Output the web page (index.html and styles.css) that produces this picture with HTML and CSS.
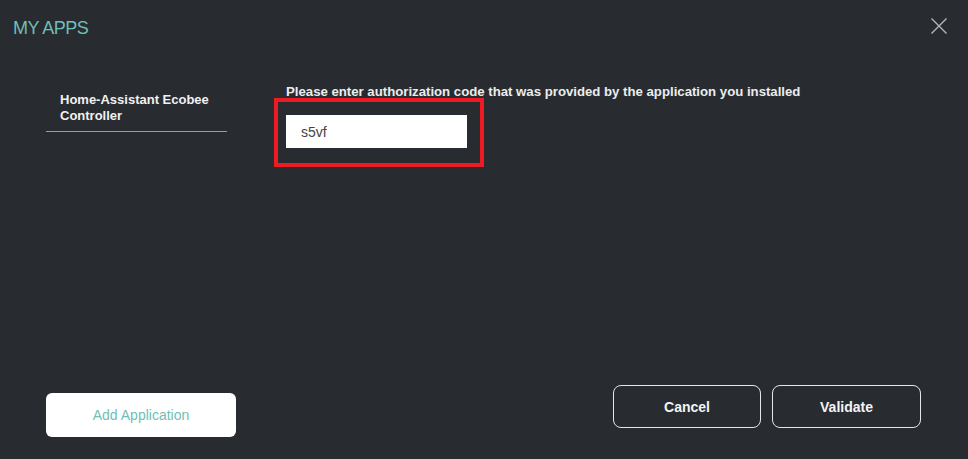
FILE: index.html
```html
<!DOCTYPE html>
<html>
<head>
<meta charset="utf-8">
<link rel="stylesheet" href="styles.css">
</head>
<body>
<div class="modal">
  <header class="header">
    <h1 class="title">MY APPS</h1>
    <button class="close" aria-label="Close">
      <svg width="16" height="16" viewBox="0 0 16 16"><path d="M0.5 0.5 L15.5 15.5 M15.5 0.5 L0.5 15.5" stroke="#b4b7ba" stroke-width="1.4" fill="none"/></svg>
    </button>
  </header>
  <div class="content">
    <aside class="sidebar">
      <div class="app-item">Home-Assistant Ecobee Controller</div>
    </aside>
    <main class="main">
      <p class="label">Please enter authorization code that was provided by the application you installed</p>
      <div class="highlight">
        <input class="code" type="text" value="s5vf">
      </div>
    </main>
  </div>
  <footer class="footer">
    <button class="btn-add">Add Application</button>
    <div class="actions">
      <button class="btn-outline">Cancel</button>
      <button class="btn-outline">Validate</button>
    </div>
  </footer>
</div>
</body>
</html>
```
FILE: styles.css
```css
html, body {
  margin: 0;
  padding: 0;
  background: #282c31;
}
body {
  font-family: "Liberation Sans", Arial, sans-serif;
  color: #fff;
}
.modal {
  width: 968px;
  height: 459px;
  display: flex;
  flex-direction: column;
  box-sizing: border-box;
}
.header {
  display: flex;
  justify-content: space-between;
  align-items: flex-start;
  padding: 18px 21px 0 13px;
  height: 42px;
}
.title {
  margin: 0;
  font-size: 18px;
  font-weight: normal;
  color: #6ebfb5;
  letter-spacing: -0.5px;
  line-height: 20px;
}
.close {
  background: none;
  border: none;
  padding: 0;
  width: 16px;
  height: 16px;
  display: block;
  cursor: pointer;
}
.close svg { display: block; }
.content {
  flex: 1;
  display: flex;
  padding-left: 46px;
  padding-top: 24px;
}
.sidebar {
  width: 181px;
  padding-top: 8px;
}
.app-item {
  padding: 0 14px 7px 14px;
  font-size: 13px;
  line-height: 16px;
  font-weight: bold;
  color: #f1f1f1;
  border-bottom: 1px solid #9a9da0;
}
.main {
  margin-left: 59px;
}
.label {
  margin: 0;
  font-size: 13.2px;
  font-weight: bold;
  color: #ececec;
  line-height: 16px;
}
.highlight {
  margin-top: -2px;
  margin-left: -12px;
  width: 202px;
  height: 61px;
  border: 4px solid #ed1c24;
  box-sizing: content-box;
  display: flex;
  align-items: flex-start;
}
.code {
  margin: 13px 0 0 8px;
  width: 181px;
  height: 33px;
  box-sizing: border-box;
  border: none;
  outline: none;
  background: #fff;
  padding: 0 0 0 15px;
  font-family: "Liberation Sans", Arial, sans-serif;
  font-size: 14px;
  color: #444;
}
.footer {
  display: flex;
  justify-content: space-between;
  align-items: flex-start;
  padding: 0 47px 22px 46px;
  height: 74px;
  box-sizing: border-box;
}
.btn-add {
  margin-top: 8px;
  width: 190px;
  height: 44px;
  border: none;
  border-radius: 6px;
  background: #fff;
  color: #6ebfb5;
  font-family: "Liberation Sans", Arial, sans-serif;
  font-size: 14px;
}
.actions {
  display: flex;
  gap: 11px;
}
.btn-outline {
  width: 148px;
  height: 43px;
  background: transparent;
  border: 1px solid #e6e6e6;
  border-radius: 8px;
  color: #f4f4f4;
  font-family: "Liberation Sans", Arial, sans-serif;
  font-size: 14px;
  font-weight: bold;
}
.btn-outline:last-child { width: 149px; }
```
